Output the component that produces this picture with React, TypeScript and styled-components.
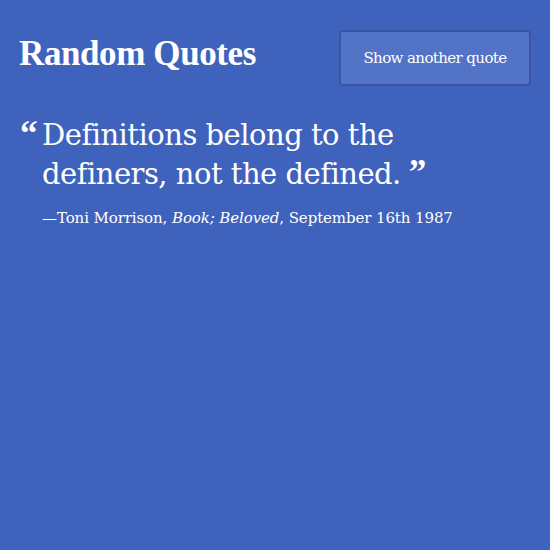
import React from "react";
import styled, { createGlobalStyle } from "styled-components";

const Global = createGlobalStyle`
  html, body { margin: 0; padding: 0; background: #3f62bd; }
  body { width: 550px; height: 550px; overflow: hidden; }
`;

const Page = styled.div`
  width: 550px;
  height: 550px;
  box-sizing: border-box;
  background: #3f62bd;
  color: #ffffff;
  padding: 30px 19px 0 19px;
  font-family: "Liberation Serif", "DejaVu Serif", serif;
`;

const Header = styled.header`
  display: flex;
  justify-content: space-between;
  align-items: flex-start;
`;

const Title = styled.h1`
  margin: 6px 0 0 0;
  font-size: 35px;
  font-weight: 700;
  line-height: 36px;
  letter-spacing: -0.4px;
`;

const Button = styled.button`
  width: 192px;
  height: 56px;
  box-sizing: border-box;
  background: #5373c6;
  border: 2px solid #3a56a3;
  border-radius: 4px;
  color: #ffffff;
  font-family: "DejaVu Serif", serif;
  font-size: 15px;
  letter-spacing: -0.6px;
  padding: 0;
`;

const QuoteBlock = styled.blockquote`
  margin: 30px 0 0 0;
  display: flex;
  align-items: baseline;
`;

const Mark = styled.span`
  font-family: "Liberation Serif", serif;
  font-size: 35px;
  font-weight: 700;
  line-height: 30px;
  width: 22px;
  flex: none;
  margin-left: 1px;
`;

const QuoteBody = styled.div`
  display: flex;
  flex-direction: column;
`;

const QuoteText = styled.p`
  margin: 0;
  font-family: "DejaVu Serif", serif;
  font-size: 29px;
  line-height: 39px;
  letter-spacing: -0.5px;
  max-width: 420px;
`;

const CloseMark = styled.span`
  font-family: "Liberation Serif", serif;
  font-weight: 700;
  font-size: 35px;
  line-height: 0;
  margin-left: 8px;
`;

const Cite = styled.p`
  margin: 14px 0 0 0;
  font-family: "DejaVu Serif", serif;
  font-size: 15px;
  line-height: 20px;
  letter-spacing: -0.1px;
`;

export default function App() {
  return (
    <>
      <Global />
      <Page>
        <Header>
          <Title>Random Quotes</Title>
          <Button>Show another quote</Button>
        </Header>
        <QuoteBlock>
          <Mark>“</Mark>
          <QuoteBody>
            <QuoteText>
              Definitions belong to the definers, not the defined.
              <CloseMark>”</CloseMark>
            </QuoteText>
            <Cite>
              —Toni Morrison, <i>Book; Beloved</i>, September 16th 1987
            </Cite>
          </QuoteBody>
        </QuoteBlock>
      </Page>
    </>
  );
}
